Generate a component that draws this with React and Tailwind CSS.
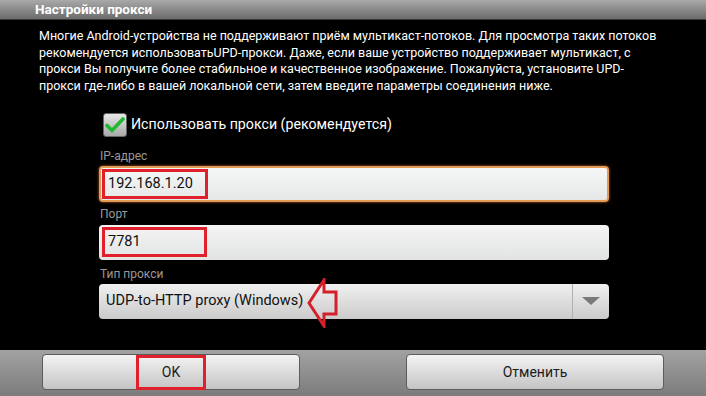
const lines = [
  'Многие Android-устройства не поддерживают приём мультикаст-потоков. Для просмотра таких потоков',
  'рекомендуется использоватьUPD-прокси. Даже, если ваше устройство поддерживает мультикаст, с',
  'прокси Вы получите более стабильное и качественное изображение. Пожалуйста, установите UPD-',
  'прокси где-либо в вашей локальной сети, затем введите параметры соединения ниже.',
]

function FieldLabel({ children }) {
  return <div className="h-[14px] text-[12px] leading-[14px] text-[#9a9a9a] pl-[1px]">{children}</div>
}

function Marked({ children, w }) {
  return (
    <span
      className="flex items-center h-[30px] border-[3px] border-[#e0202a] pl-[3px] text-[14.5px] text-[#111]"
      style={{ width: w }}
    >
      {children}
    </span>
  )
}

export default function App() {
  return (
    <div
      className="w-[706px] h-[396px] flex flex-col bg-black overflow-hidden"
      style={{ fontFamily: 'Roboto, "Noto Sans", sans-serif' }}
    >
      {/* title bar */}
      <div className="h-[20px] shrink-0 bg-gradient-to-b from-[#a9a9a9] to-[#6c6c6c] border-b border-[#3a3a3a] pl-[35px] text-white font-bold text-[13.5px] leading-[19px]">
        Настройки прокси
      </div>

      <div className="flex-1 flex flex-col">
        <div className="pt-[8px] pl-[39px] text-white text-[12.5px] leading-[16.7px] whitespace-nowrap">
          {lines.map((l, i) => (
            <div key={i}>{l}</div>
          ))}
        </div>

        <div className="ml-[99px] w-[510px] mt-[18px]">
          {/* checkbox */}
          <div className="flex items-center h-[24px] ml-[4px]">
            <div className="w-[24px] h-[24px] rounded-[3px] bg-gradient-to-b from-[#e8e8e8] to-[#a8a8a8] border border-[#666] flex items-center justify-center">
              <svg width="20" height="18" viewBox="0 0 20 18">
                <path d="M2 9.5l5 5L18 3" fill="none" stroke="#1fb832" strokeWidth="3.6" strokeLinecap="round" strokeLinejoin="round" />
              </svg>
            </div>
            <span className="ml-[4px] text-white text-[14.2px]">Использовать прокси (рекомендуется)</span>
          </div>

          <div className="mt-[12px]">
            <FieldLabel>IP-адрес</FieldLabel>
            <div className="mt-[3px] h-[36px] rounded-[4px] border-[2px] border-[#e49a55] bg-gradient-to-b from-[#f6f6f6] to-[#e6e8e8] shadow-[0_0_3px_#b8652a] flex items-center pl-[1px]">
              <Marked w={106}>192.168.1.20</Marked>
            </div>
          </div>

          <div className="mt-[5px]">
            <FieldLabel>Порт</FieldLabel>
            <div className="mt-[4px] h-[35px] rounded-[4px] bg-gradient-to-b from-[#f4f4f4] to-[#e2e4e4] flex items-center pl-[3px]">
              <Marked w={105}>7781</Marked>
            </div>
          </div>

          <div className="mt-[7px]">
            <FieldLabel>Тип прокси</FieldLabel>
            <div className="relative mt-[3px] h-[35px] rounded-[4px] bg-gradient-to-b from-[#f0f0f0] to-[#cbcbcb] flex items-center">
              <span className="flex-1 pl-[7px] text-[14.5px] text-[#111]">UDP-to-HTTP proxy (Windows)</span>
              <div className="w-[37px] h-full border-l border-[#b0b0b0] flex items-center justify-center">
                <svg width="18" height="8" viewBox="0 0 18 8">
                  <path d="M0 0h18L9 8z" fill="#7a7a7a" />
                </svg>
              </div>
              <svg className="absolute left-[208px] top-[-6px]" width="31" height="50" viewBox="0 0 31 50">
                <path d="M2 25L17 2v12h12v22H17v12z" fill="none" stroke="#d4202a" strokeWidth="3" strokeLinejoin="miter" />
              </svg>
            </div>
          </div>
        </div>
      </div>

      {/* footer */}
      <div className="h-[46px] shrink-0 bg-gradient-to-b from-[#a2a2a2] to-[#7c7c7c] flex justify-between px-[42px] pt-[4px]">
        <button className="w-[258px] h-[36px] rounded-[4px] border border-[#5c5c5c] bg-gradient-to-b from-[#f4f4f4] to-[#c4c4c4] flex items-center justify-center">
          <span className="w-[70px] h-[35px] border-[3px] border-[#e0202a] flex items-center justify-center text-[14px] text-[#1c1c1c]">
            OK
          </span>
        </button>
        <button className="w-[258px] h-[36px] rounded-[4px] border border-[#5c5c5c] bg-gradient-to-b from-[#f4f4f4] to-[#c4c4c4] flex items-center justify-center text-[14px] text-[#1c1c1c]">
          Отменить
        </button>
      </div>
    </div>
  )
}
